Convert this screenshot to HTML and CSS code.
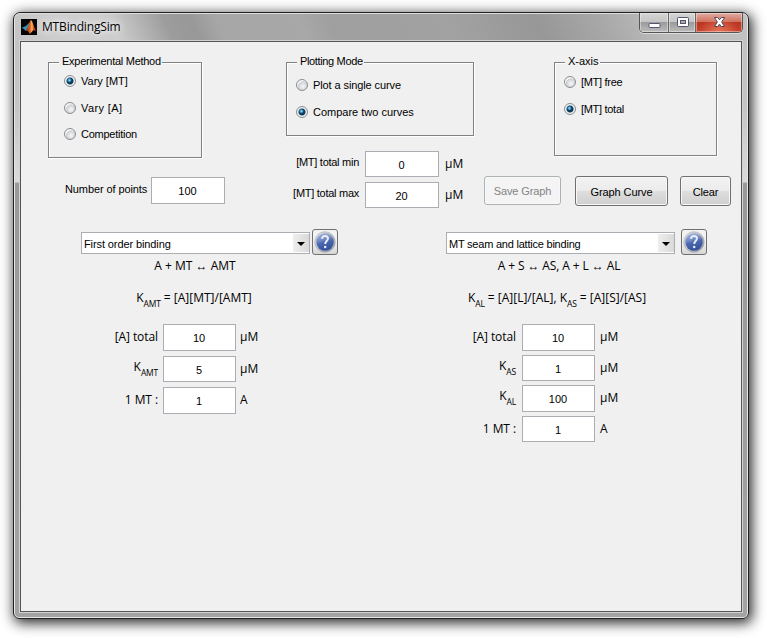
FILE: index.html
```html
<!DOCTYPE html>
<html lang="en">
<head>
<meta charset="utf-8">
<title>MTBindingSim</title>
<link rel="stylesheet" href="styles.css">
</head>
<body>
<svg class="defs" width="0" height="0" aria-hidden="true">
  <defs>
    <linearGradient id="ball" x1="0" y1="0" x2=".3" y2="1">
      <stop offset="0" stop-color="#a9bbdf"/><stop offset=".45" stop-color="#7189c4"/><stop offset=".6" stop-color="#4c68ae"/><stop offset="1" stop-color="#35529c"/>
    </linearGradient>
    <linearGradient id="ring" x1="0" y1="0" x2="1" y2="1">
      <stop offset="0" stop-color="#e4e6ea"/><stop offset="1" stop-color="#8f939e"/>
    </linearGradient>
    <linearGradient id="peak" x1="0" y1="0" x2="1" y2="0">
      <stop offset="0" stop-color="#7a2412"/><stop offset=".45" stop-color="#e0662a"/><stop offset=".6" stop-color="#ffb861"/><stop offset=".75" stop-color="#d9541f"/><stop offset="1" stop-color="#b8351c"/>
    </linearGradient>
    <symbol id="help" viewBox="0 0 22 22">
      <circle cx="11" cy="11" r="10.3" fill="url(#ring)" stroke="#a6a8ae" stroke-width=".6"/>
      <circle cx="11" cy="11" r="8.700" fill="url(#ball)"/>
      <path d="M8 7.900c.1-1.800 1.300-2.900 3-2.900 1.800 0 3 1 3 2.500 0 2.300-2.800 2.800-2.800 5.500" fill="none" stroke="#e6ebf7" stroke-width="1.900"/>
      <circle cx="11.200" cy="16" r="1.250" fill="#e6ebf7"/>
    </symbol>
  </defs>
</svg>
<div class="window">
  <header class="titlebar">
    <svg class="app-icon" width="16" height="16" viewBox="0 0 16 16">
      <rect width="16" height="16" fill="#050505"/>
      <path d="M.8 8.700 5 7l2.200-2.300L9 3.200 7 10l-2.500 2-1.200-1.700z" fill="#3795bb"/>
      <path d="M4.400 11.600C7.500 9.500 8.400 1.300 10 1.300c1.600 0 3 7.900 5.300 11-2.300-1.600-3.200-1-4.500.6l-2.300 2c-.6-1.900-1.700-3.500-4.100-3.300z" fill="url(#peak)"/>
    </svg>
    <h1 class="title">MTBindingSim</h1>
    <div class="controls">
      <span class="control"><svg width="13" height="13"><rect x="1" y="7.500" width="11" height="4" rx=".8" fill="#fff" stroke="#54566f"/></svg></span>
      <span class="control control-max"><svg width="13" height="13"><rect x="1.500" y="1.500" width="11" height="9" rx=".8" fill="#fff" stroke="#54566f"/><rect x="4.500" y="4.500" width="5" height="3" fill="#aaa" stroke="#54566f"/></svg></span>
      <span class="control control-close"><svg width="13" height="13"><path d="M1.500 1.500h3.200L6.500 3.800l1.800-2.300h3.200L8.700 6l2.800 4.500H8.300L6.500 8.200l-1.800 2.300H1.500L4.300 6z" fill="#fff" stroke="#54455c"/></svg></span>
    </div>
  </header>
  <main class="client">
    <section class="settings">
      <div class="col">
        <div class="group group-method">
          <span class="legend legend-tight">Experimental Method</span>
          <label class="option"><i class="radio on"></i>Vary [MT]</label>
          <label class="option"><i class="radio spaced-icon"></i><span class="wide">Vary [A]</span></label>
          <label class="option"><i class="radio"></i><span class="narrow">Competition</span></label>
        </div>
        <div class="points"><span class="points-label">Number of points</span><span class="field">100</span></div>
      </div>
      <div class="col">
        <div class="group group-mode">
          <span class="legend legend-mode">Plotting Mode</span>
          <label class="option"><i class="radio"></i><span class="narrow">Plot a single curve</span></label>
          <label class="option"><i class="radio on"></i>Compare two curves</label>
        </div>
        <div class="range">
          <span class="range-label">[MT] total min</span><span class="field">0</span><span class="unit">μM</span>
          <span class="range-label">[MT] total max</span><span class="field">20</span><span class="unit">μM</span>
        </div>
      </div>
      <div class="col">
        <div class="group group-axis">
          <span class="legend">X-axis</span>
          <label class="option"><i class="radio"></i><span class="tight">[MT] free</span></label>
          <label class="option"><i class="radio on"></i><span class="tight">[MT] total</span></label>
        </div>
        <div class="actions">
          <span class="button button-save">Save Graph</span>
          <span class="button button-graph">Graph Curve</span>
          <span class="button button-clear">Clear</span>
        </div>
      </div>
    </section>
    <section class="models">
      <div class="model model-first">
        <div class="picker">
          <div class="select"><span class="select-text">First order binding</span><span class="arrow"></span></div>
          <span class="help"><svg width="22" height="22"><use href="#help"/></svg></span>
        </div>
        <p class="reaction"><span>A + MT ↔ AMT</span></p>
        <p class="constants"><span>K<sub>AMT</sub> = [A][MT]/[AMT]</span></p>
        <div class="params">
          <span class="name">[A] total</span><span class="field">10</span><span class="unit">μM</span>
          <span class="name name-sub">K<sub>AMT</sub></span><span class="field low">5</span><span class="unit">μM</span>
          <span class="name">1 MT :</span><span class="field">1</span><span class="unit">A</span>
        </div>
      </div>
      <div class="model model-second">
        <div class="picker">
          <div class="select"><span class="select-text">MT seam and lattice binding</span><span class="arrow"></span></div>
          <span class="help"><svg width="22" height="22"><use href="#help"/></svg></span>
        </div>
        <p class="reaction"><span>A + S ↔ AS, A + L ↔ AL</span></p>
        <p class="constants"><span>K<sub>AL</sub> = [A][L]/[AL], K<sub>AS</sub> = [A][S]/[AS]</span></p>
        <div class="params">
          <span class="name">[A] total</span><span class="field">10</span><span class="unit">μM</span>
          <span class="name name-sub">K<sub>AS</sub></span><span class="field low">1</span><span class="unit">μM</span>
          <span class="name name-sub">K<sub>AL</sub></span><span class="field">100</span><span class="unit">μM</span>
          <span class="name">1 MT :</span><span class="field low">1</span><span class="unit">A</span>
        </div>
      </div>
    </section>
  </main>
</div>
</body>
</html>
```
FILE: styles.css
```css
* { box-sizing: border-box; }
body {
  margin: 0;
  width: 767px;
  height: 638px;
  padding: 12px 0 0 13px;
  overflow: hidden;
  background: #fff;
  color: #000;
  font: 11px/14px "Liberation Sans", Arial, sans-serif;
  white-space: nowrap;
}
.defs { position: absolute; }
p, h1 { margin: 0; font-weight: normal; }
.narrow { letter-spacing: -.25px; }
.group-mode .narrow { letter-spacing: -.1px; }
.wide { letter-spacing: .4px; }
.tight { letter-spacing: -.3px; }

/* Window frame */
.window {
  width: 736px;
  height: 607px;
  padding: 0 6px;
  border: 1px solid #222;
  border-radius: 7px 7px 6px 6px;
  background: linear-gradient(180deg, #c2c2c2 0, #c4c4c4 90px, #dadada 169px, #999 170px, #a3a3a3 100%);
  box-shadow: inset 0 0 0 1px #e6e6e6, 2px 3px 13px 1px rgba(0, 0, 0, .85);
}
.titlebar {
  display: flex;
  height: 28px;
  margin: 0 -5px;
  padding-left: 6px;
  padding-right: 5px;
  border-top: 1px solid #ddd;
  border-radius: 6px 6px 0 0;
  background: linear-gradient(65deg, #c4c4c4 0, #cfcfcf 50px, #cdcdcd 95px, #b0b0b0 125px, #9c9c9c 145px, #989898 168px, #a6a6a6 190px, #a8a8a8 265px, #9f9f9f 295px, #a2a2a2 400px, #979797 480px, #a8a8a8 540px, #bbb 590px, #c2c2c2 100%);
}
.app-icon { margin: 5px 5px 0 0; }
.title { margin-top: 5px; font: 12px/16px "Open Sans", sans-serif; letter-spacing: -.17px; text-shadow: 0 0 6px #fff, 0 0 9px #eee; }
.controls {
  display: flex;
  width: 104px;
  height: 20px;
  margin: -1px -1px 0 auto;
  border: 1px solid #555;
  border-top: 0;
  border-radius: 0 0 5px 5px;
  overflow: hidden;
  box-shadow: 0 1px 0 #ddd;
}
.control {
  width: 29px;
  display: flex;
  justify-content: center;
  padding-top: 3px;
  border-right: 1px solid #666;
  background: linear-gradient(#d5d5d5 0, #c6c6c6 45%, #999 46%, #bcbcbc 100%);
  box-shadow: inset 0 0 0 1px rgba(255, 255, 255, .4);
}
.control-max { width: 27px; }
.control-close {
  width: 46px;
  border: 0;
  background: radial-gradient(ellipse at 50% 100%, rgba(255, 160, 120, .55), transparent 60%), linear-gradient(#e0aea2 0, #cf7260 45%, #b93421 46%, #c8442e 100%);
}
.client {
  width: 722px;
  height: 571px;
  border: 1px solid #555;
  background: #f0f0f0;
  box-shadow: 0 0 0 1px #d2d2d2;
}

/* Settings */
.settings { display: grid; grid-template-columns: 265px 198px 257px; height: 187px; padding-top: 20px; }
.group {
  display: flex;
  flex-direction: column;
  align-items: flex-start;
  border: 1px solid #828282;
  box-shadow: 1px 1px 0 #fff, inset 1px 1px 0 #fff;
}
.legend { height: 14px; margin: -9px 0 0 10px; padding: 0 1px 0 3px; background: #f0f0f0; }
.legend-tight { letter-spacing: -.27px; }
.legend-mode { letter-spacing: -.35px; }
.option { display: flex; align-items: center; height: 14px; gap: 5px; }
.radio {
  width: 12px;
  height: 12px;
  border: 1px solid #8a8c8e;
  border-radius: 50%;
  background: radial-gradient(circle at 60% 65%, #f7f7f7 0, #cbcfd5 55%, #f5f5f5 60%);
}
.radio.on { background: radial-gradient(circle at 44% 42%, #a5e2fa 0, #2b8dbb 1.500px, transparent 2.500px), radial-gradient(circle at 50% 50%, #0b3657 0, #123a58 3px, #eef2f4 4px); }
.group-method { width: 154px; height: 96px; margin-left: 27px; }
.group-method .option { margin: 6px 0 0 15px; }
.group-method .option + .option { margin-top: 13px; }
.group-method .option:last-child { margin-top: 12px; }
.group-mode { width: 188px; height: 74px; }
.group-mode .option { margin: 10px 0 0 9px; }
.group-mode .option + .option { margin-top: 13px; }
.group-axis { width: 163px; height: 94px; margin-left: 70px; }
.group-axis .option { margin: 7px 0 0 9px; }
.group-axis .option + .option { margin-top: 13px; }
.field {
  display: block;
  width: 74px;
  height: 27px;
  padding-top: 1px;
  padding-right: 1px;
  border: 1px solid #abadb3;
  background: #fff;
  line-height: 25px;
  text-align: center;
}
.points { display: flex; margin: 19px 0 0 44px; }
.points-label { width: 86px; line-height: 25px; letter-spacing: -.1px; }
.range { display: grid; grid-template-columns: 73px 74px 1fr; column-gap: 6px; row-gap: 5px; margin-top: 15px; }
.range .field { height: 26px; line-height: 24px; }
.range-label { line-height: 22px; text-align: right; letter-spacing: -.27px; }
.unit { font: 12px/26px "Open Sans", sans-serif; }
.actions { display: flex; align-items: flex-start; margin-top: 20px; }
.button {
  height: 30px;
  border: 1px solid #707070;
  border-radius: 3px;
  background: linear-gradient(#f3f3f3 0, #ebebeb 48%, #dedede 50%, #cfcfcf 100%);
  box-shadow: inset 0 0 0 1px #f8f8f8;
  line-height: 30px;
  text-align: center;
}
.button-save { width: 77px; height: 29px; border-color: #adb2b5; background: #f4f4f4; color: #838383; line-height: 28px; letter-spacing: -.1px; }
.button-graph { width: 93px; margin-left: 14px; letter-spacing: -.1px; }
.button-clear { width: 51px; margin-left: 12px; letter-spacing: -.2px; }

/* Binding models */
.models { display: grid; grid-template-columns: 365px 1fr; }
.model-first { padding-left: 60px; }
.model-second { padding-left: 60px; }
.picker { display: flex; height: 26px; gap: 2px; }
.model-second .picker { gap: 6px; }
.select { display: flex; width: 229px; height: 22px; margin-top: 3px; border: 1px solid #abadb3; background: #fff; }
.select-text { flex: 1; padding-left: 2px; line-height: 23px; letter-spacing: -.1px; }
.model-second .select-text { letter-spacing: -.22px; }
.arrow { display: flex; width: 16px; margin: 1px 0 1px; align-items: center; justify-content: center; background: linear-gradient(90deg, #eee, #d9d9d9); }
.arrow::before { content: ""; margin-top: 1px; border: 4px solid transparent; border-top-color: #000; border-bottom: 0; }
.help {
  display: flex;
  width: 26px;
  height: 26px;
  align-items: center;
  justify-content: center;
  border: 1px solid #707070;
  border-radius: 3px;
  background: linear-gradient(#f2f2f2 50%, #d6d6d6);
}
.reaction, .constants, .name { font: 12px/18px "Open Sans", sans-serif; }
.reaction { width: 228px; margin-top: 2px; text-align: center; }
.constants { width: 226px; margin-top: 14px; text-align: center; }
.model-second .reaction { width: 226px; letter-spacing: -.1px; }
.model-second .constants { width: 222px; }
sub { font-size: 8.500px; line-height: 0; vertical-align: -5px; letter-spacing: -.2px; }
.params { display: grid; grid-template-columns: 77px 74px 1fr; column-gap: 5px; row-gap: 5px; margin-top: 17px; }
.model-second .params { grid-template-columns: 70px 74px 1fr; column-gap: 6px; row-gap: 4px; }
.name { line-height: 25px; text-align: right; letter-spacing: -.08px; }
.name-sub { line-height: 22px; }
.params .field { width: 73px; }
.params .field.low { height: 26px; line-height: 24px; }
.params .unit { height: 26px; margin-left: -2px; }
```
